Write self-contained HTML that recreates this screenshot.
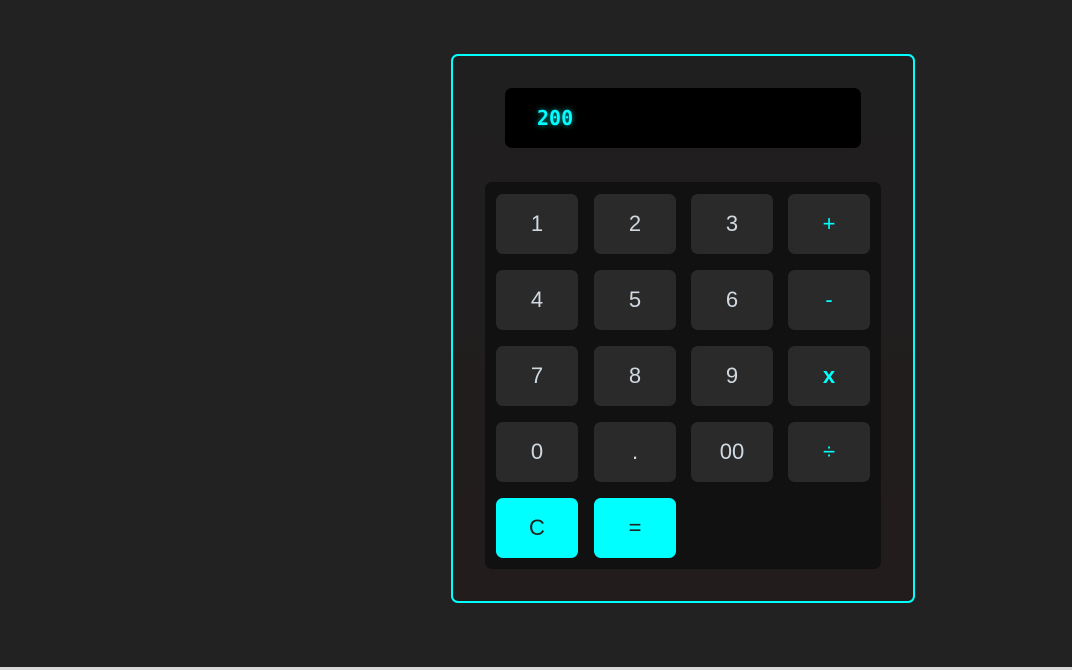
<!DOCTYPE html>
<html><head><style>
html,body{margin:0;padding:0;}
body{width:1072px;height:670px;background:#222;position:relative;overflow:hidden;font-family:"Liberation Sans",sans-serif;}
.calc{position:absolute;left:451px;top:54px;width:460px;height:545px;border:2px solid #00ffff;border-radius:7px;background:linear-gradient(#1f1f1f,#221c1c);}
.disp{position:absolute;left:505px;top:88px;width:356px;height:60px;background:#000;border-radius:7px;}
.disp span{position:absolute;left:32px;top:18px;font-family:"DejaVu Sans Mono","Liberation Mono",monospace;font-weight:bold;font-size:20px;color:#00ffff;text-shadow:0 0 6px rgba(0,255,255,.6);}
.pad{position:absolute;left:485px;top:182px;width:396px;height:387px;background:#111;border-radius:7px;}
.b{position:absolute;width:82px;height:60px;background:#2a2a2a;border-radius:7px;color:#d0d8e0;font-size:22px;line-height:60px;text-align:center;}
.o{color:#00ffff;}
.c{background:#00ffff;color:#222;}
.bar{position:absolute;left:0;top:667px;width:1072px;height:3px;background:#d8d8d8;}
</style></head><body>
<div class="calc"></div>
<div class="disp"><span>200</span></div>
<div class="pad"></div>
<div class="b" style="left:496px;top:194px">1</div>
<div class="b" style="left:594px;top:194px">2</div>
<div class="b" style="left:691px;top:194px">3</div>
<div class="b o" style="left:788px;top:194px">+</div>
<div class="b" style="left:496px;top:270px">4</div>
<div class="b" style="left:594px;top:270px">5</div>
<div class="b" style="left:691px;top:270px">6</div>
<div class="b o" style="left:788px;top:270px">-</div>
<div class="b" style="left:496px;top:346px">7</div>
<div class="b" style="left:594px;top:346px">8</div>
<div class="b" style="left:691px;top:346px">9</div>
<div class="b o" style="left:788px;top:346px;font-weight:bold">x</div>
<div class="b" style="left:496px;top:422px">0</div>
<div class="b" style="left:594px;top:422px">.</div>
<div class="b" style="left:691px;top:422px">00</div>
<div class="b o" style="left:788px;top:422px">÷</div>
<div class="b c" style="left:496px;top:498px">C</div>
<div class="b c" style="left:594px;top:498px">=</div>
<div class="bar"></div>
</body></html>
